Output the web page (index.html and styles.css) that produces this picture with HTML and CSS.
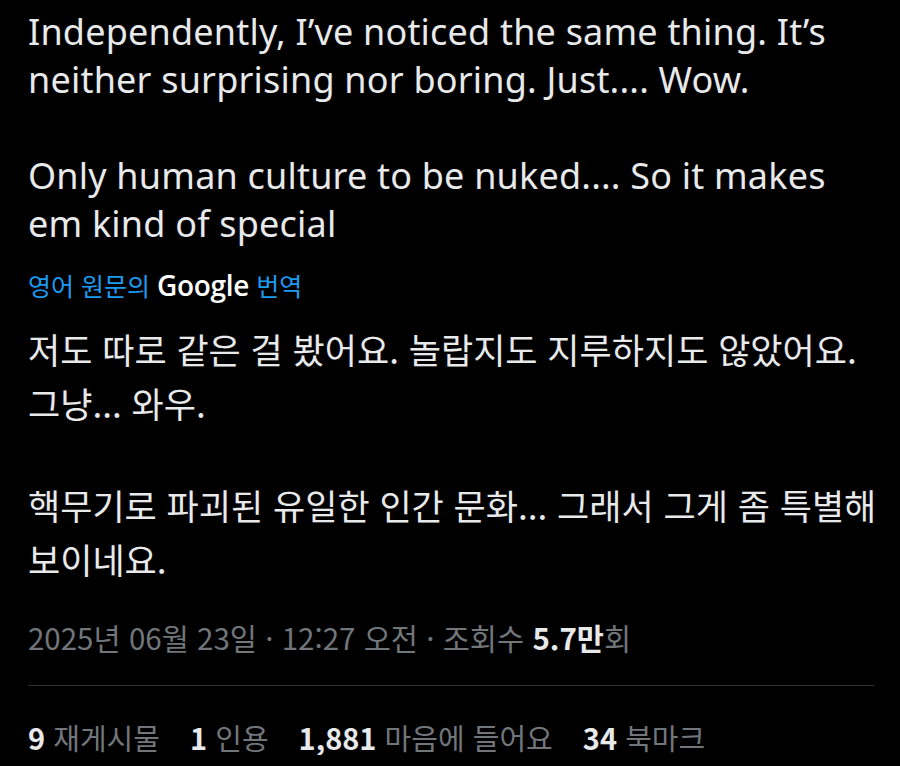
FILE: index.html
```html
<!DOCTYPE html>
<html lang="ko">
<head>
<meta charset="utf-8">
<link rel="stylesheet" href="styles.css">
</head>
<body>
<main class="tweet">
  <div class="original">
    <p>Independently, I’ve noticed the same thing. It’s neither surprising nor boring. Just.... Wow.</p>
    <p>Only human culture to be nuked.... So it makes em kind of special</p>
  </div>
  <div class="translate">영어 원문의 <span class="google">Google</span> 번역</div>
  <div class="translated">
    <p>저도 따로 같은 걸 봤어요. 놀랍지도 지루하지도 않았어요. 그냥... 와우.</p>
    <p>핵무기로 파괴된 유일한 인간 문화... 그래서 그게 좀 특별해 보이네요.</p>
  </div>
  <div class="meta">2025년 06월 23일 · 12:27 오전 · 조회수 <b>5.7만</b>회</div>
  <div class="stats">
    <span><b>9</b> 재게시물</span>
    <span><b>1</b> 인용</span>
    <span><b>1,881</b> 마음에 들어요</span>
    <span><b>34</b> 북마크</span>
  </div>
</main>
</body>
</html>
```
FILE: styles.css
```css
html, body {
  margin: 0;
  padding: 0;
  background: #000;
}
.tweet {
  padding: 8px 16px 0 28px;
  color: #e7e9ea;
  font-family: "Noto Sans", "Noto Sans CJK KR", sans-serif;
}
.original {
  margin-right: 10px;
}
.original p {
  margin: 0 0 48px;
  font-size: 36px;
  line-height: 48px;
  letter-spacing: 0.2px;
}
.original p:last-child { margin-bottom: 0; }
.translate {
  margin-top: 21px;
  font-family: "Noto Sans CJK KR", sans-serif;
  font-size: 25px;
  line-height: 32px;
  color: #1d9bf0;
}
.google {
  color: #fff;
  font-family: "Open Sans", sans-serif;
  font-weight: 600;
  font-size: 28px;
  letter-spacing: -0.3px;
}
.translated {
  margin-top: 21px;
}
.translated p {
  margin: 0 0 48px;
  font-family: "Noto Sans CJK KR", sans-serif;
  font-size: 35px;
  line-height: 54px;
}
.translated p:last-child { margin-bottom: 0; }
.meta {
  margin: 33px 10px 0 0;
  font-family: "Noto Sans CJK KR", sans-serif;
  font-size: 29.5px;
  line-height: 36px;
  color: #71767b;
  padding-bottom: 30px;
  border-bottom: 1px solid #2f3336;
}
.meta b { color: #e7e9ea; font-weight: 700; }
.stats {
  display: flex;
  gap: 30px;
  padding-top: 33px;
  font-family: "Noto Sans CJK KR", sans-serif;
  font-size: 29px;
  line-height: 36px;
  color: #71767b;
}
.stats b { color: #e7e9ea; font-weight: 700; }
```
